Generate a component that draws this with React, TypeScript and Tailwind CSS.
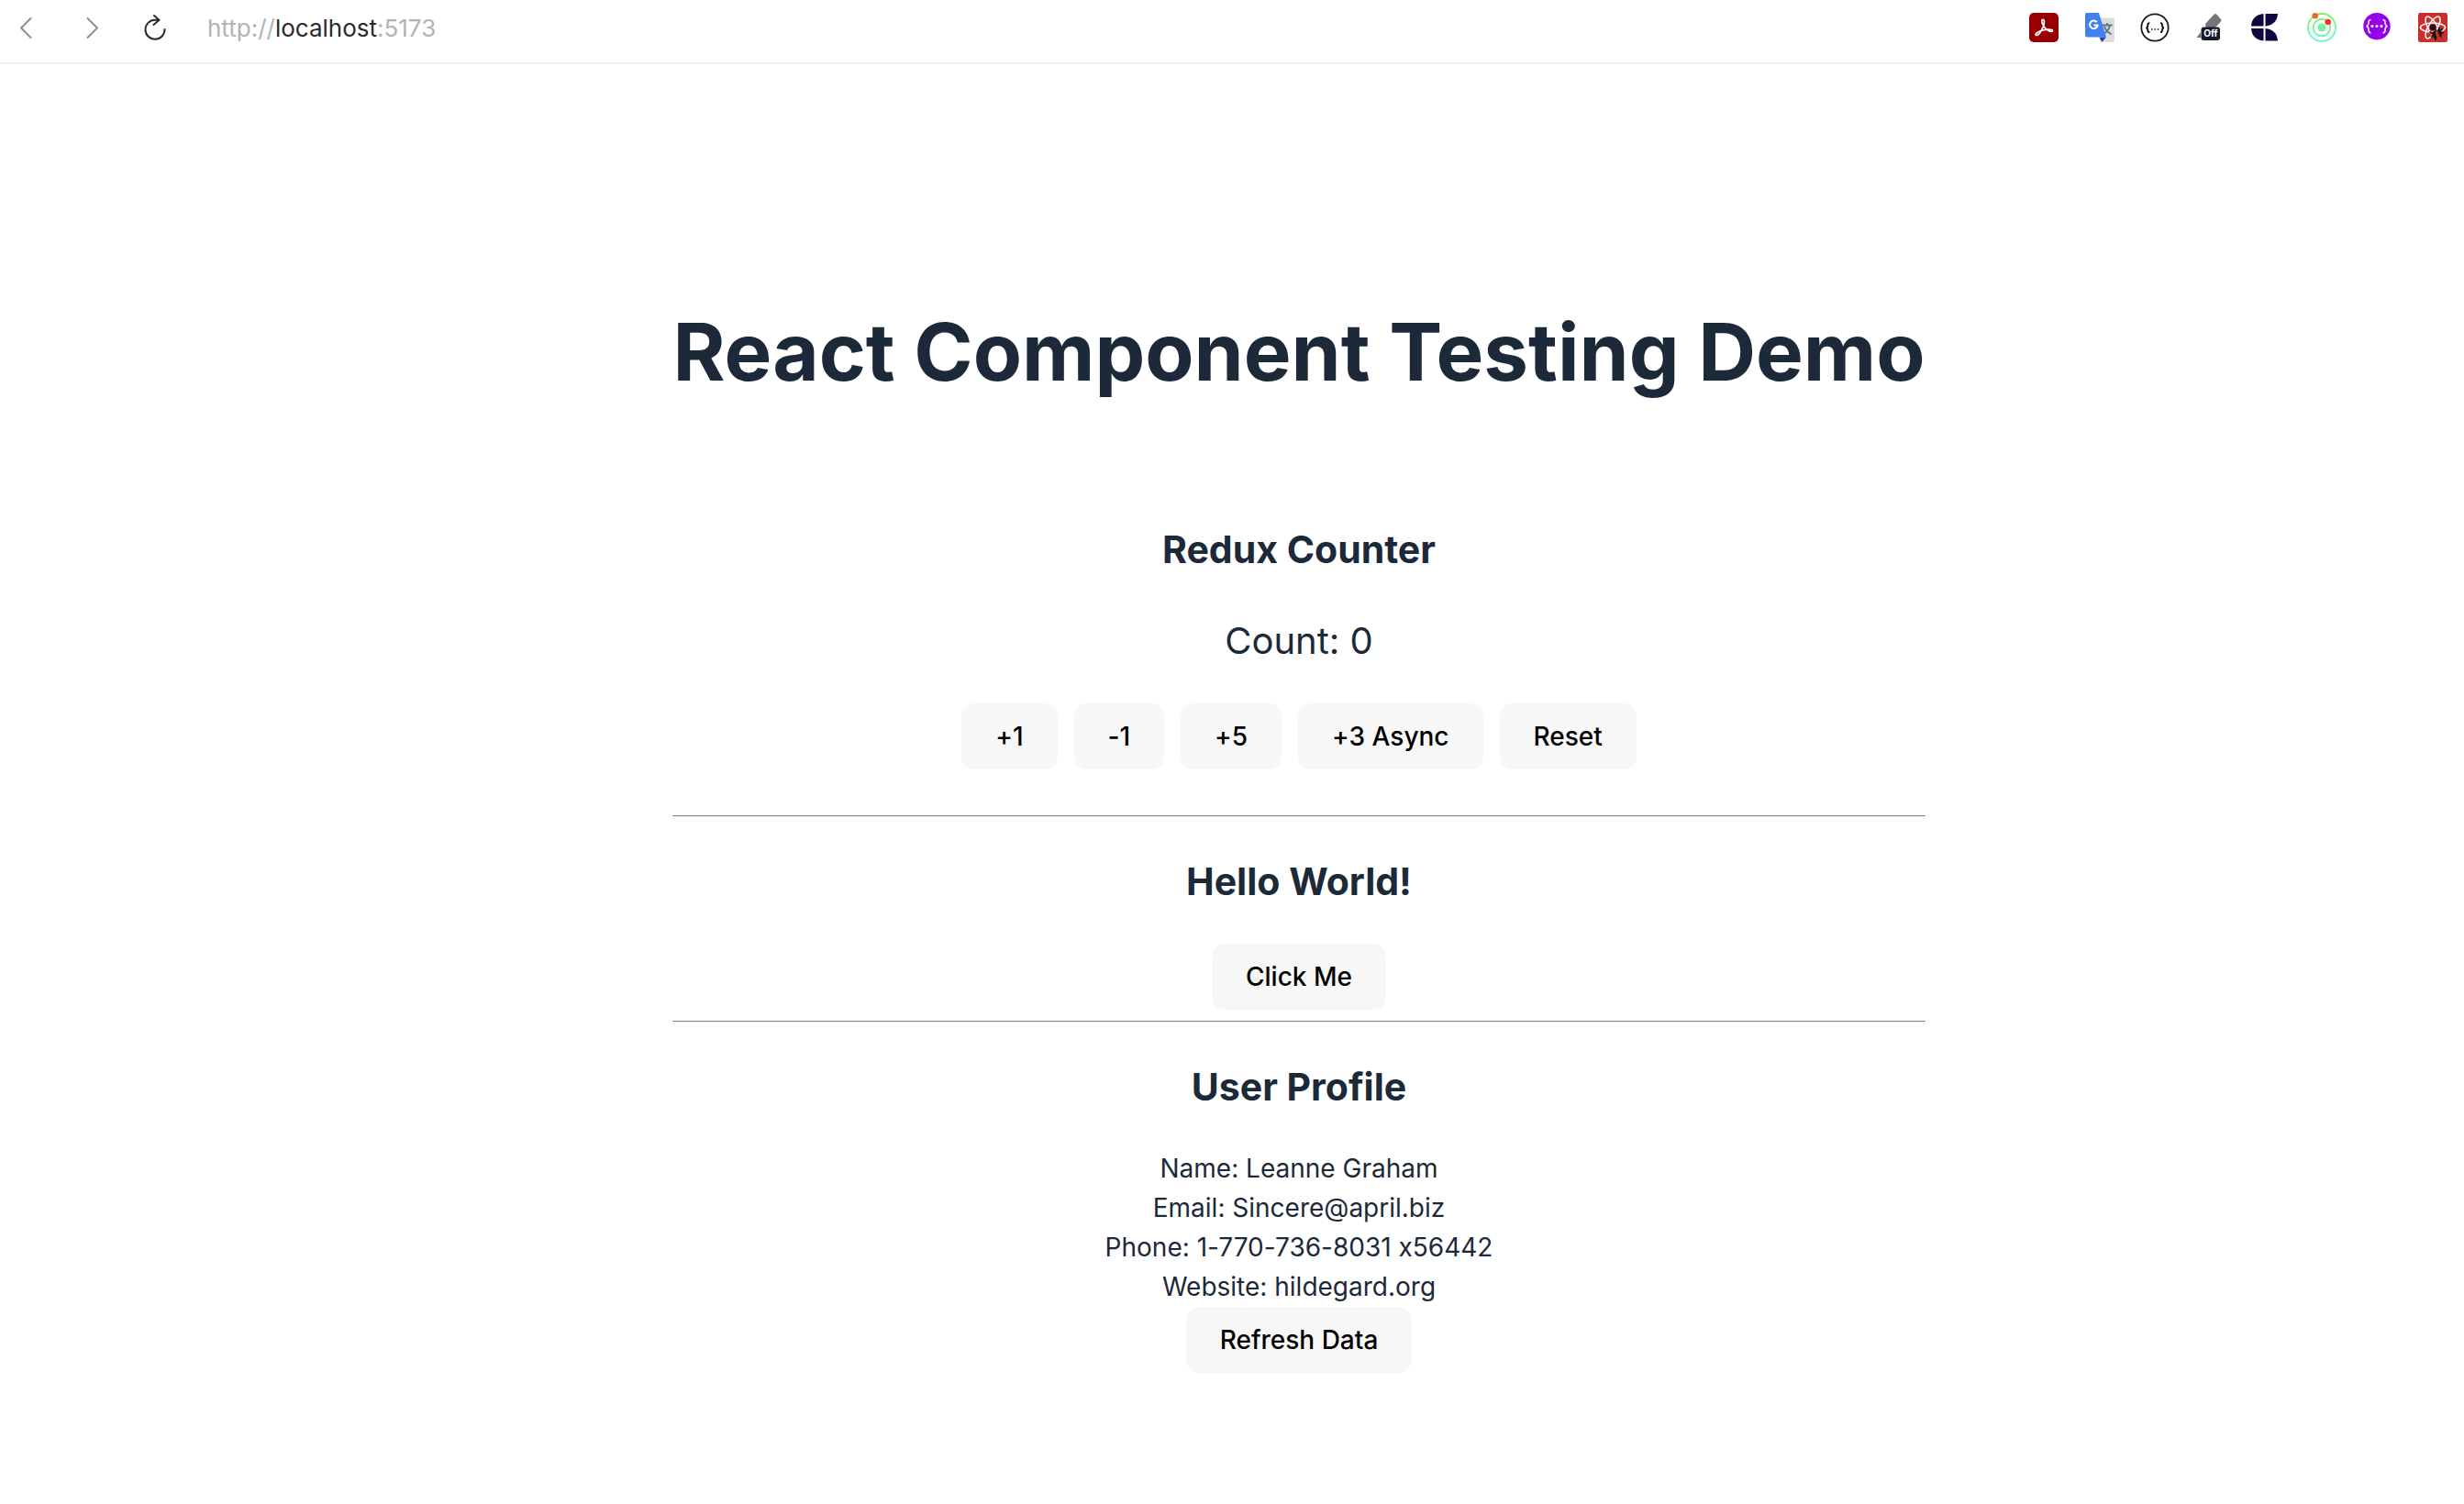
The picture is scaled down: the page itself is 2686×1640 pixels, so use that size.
import { useState, type ReactNode } from 'react';

function ActionButton({ children, onClick }: { children: ReactNode; onClick?: () => void }) {
  return (
    <button
      type="button"
      onClick={onClick}
      className="h-[72px] rounded-[14px] bg-[#f7f7f7] px-[37px] text-[28px] font-medium text-black"
    >
      {children}
    </button>
  );
}

function SectionTitle({ children }: { children: ReactNode }) {
  return <h2 className="text-[41px] leading-[64px] font-bold">{children}</h2>;
}

function Divider() {
  return <hr className="border-t border-b border-t-[#858788] border-b-[#ececec]" />;
}

function AcrobatIcon() {
  return (
    <svg viewBox="0 0 32 32" className="size-8" fill="none">
      <rect width="32" height="32" rx="5" fill="#980000" />
      <path
        d="M14.6 7.6c2.2-.9 2.6 3.2.2 8.6-2.200 5-5.200 8.800-7.200 8.300-2.200-.8 1.400-4 6.200-5.300 5-1.400 11.600-1.600 11.600.3 0 2.200-5.200.5-8.200-3-3-3.300-4.200-8.200-2.600-8.900z"
        stroke="#fff"
        strokeWidth="1.7"
        strokeLinejoin="round"
      />
    </svg>
  );
}

function TranslateIcon() {
  return (
    <svg viewBox="0 0 32 32" className="size-8" fill="none">
      <path d="M13 5.500h17a2 2 0 0 1 2 2V30a2 2 0 0 1-2 2H19z" fill="#dcdcdc" />
      <path d="M19 13.500h10.500M24 11v2.500M27 13.500c-.8 4-3.500 7.500-7 9.800M21 15c1.200 3.500 4 6.500 7.500 8.500" stroke="#5b7583" strokeWidth="1.800" />
      <path d="M15.500 26.500h7.500L18 32z" fill="#2a3db0" />
      <path d="M2 0h13l8 26.500H2a2 2 0 0 1-2-2V2a2 2 0 0 1 2-2z" fill="#4280ef" />
      <path d="M12.700 10.200A4.300 4.300 0 1 0 13.600 13.500H9.400" stroke="#fff" strokeWidth="2" />
    </svg>
  );
}

function BracesRingIcon() {
  return (
    <svg viewBox="0 0 32 32" className="size-8" fill="none">
      <circle cx="16" cy="16" r="14.700" stroke="#1b1b1b" strokeWidth="1.800" />
      <path
        d="M10.300 11.200c-2 0-2 .8-2 2.300s-.2 2.600-1.900 2.800c1.700.2 1.900 1.200 1.900 2.600s0 2.300 2 2.300M22 11.200c2 0 2 .8 2 2.300s.2 2.600 1.900 2.800c-1.700.2-1.900 1.200-1.900 2.600s0 2.300-2 2.300"
        stroke="#000"
        strokeWidth="1.700"
      />
      <path d="M12 17.200h1.600v1.600H12zM15.400 17.200H17v1.600h-1.600zM18.800 17.200h1.600v1.600h-1.600z" fill="#222" />
    </svg>
  );
}

function HighlighterIcon() {
  return (
    <svg viewBox="0 0 32 32" className="size-8">
      <path d="M19.500 1.800q1.500-1.500 3 0l4.600 5.400q.8 1.200-.3 2.500L19 18h-8l-1-6z" fill="#757575" />
      <path d="M5 21v6H.5z" fill="#757575" />
      <rect x="5.500" y="15.500" width="20.500" height="14.500" rx="3" fill="#171a2b" />
      <text x="15.800" y="26.200" textAnchor="middle" fill="#fff" fontSize="10" fontWeight="700" fontFamily="Inter, sans-serif">
        Off
      </text>
    </svg>
  );
}

function QuarterKIcon() {
  return (
    <svg viewBox="0 0 32 32" className="size-8" fill="#10053f">
      <path d="M13.500 1v13.500H0C.6 6.500 5.500 1.500 13.500 1zM15.500 1H29c-.5 8-5.500 13-13.500 13.500zM0 17h13.500v13.500C5.500 30 .6 25 0 17zM15.500 17C23.500 17.500 28.500 22.500 29 30.500H15.500z" />
    </svg>
  );
}

function OrbitIcon() {
  return (
    <svg viewBox="0 0 32 32" className="size-8" fill="none">
      <defs>
        <linearGradient id="orbit" x1="0" y1="0" x2="0" y2="32" gradientUnits="userSpaceOnUse">
          <stop stopColor="#7df45c" />
          <stop offset="1" stopColor="#70f5dc" />
        </linearGradient>
      </defs>
      <circle cx="16" cy="16" r="15" stroke="url(#orbit)" strokeWidth="1.900" />
      <circle cx="16" cy="16" r="9.300" stroke="url(#orbit)" strokeWidth="1.900" />
      <circle cx="16" cy="16" r="4.600" fill="url(#orbit)" />
      <circle cx="8.700" cy="3.300" r="3.300" fill="#ec6b2b" />
      <circle cx="22.700" cy="10" r="3.300" fill="#e8382c" />
    </svg>
  );
}

function PurpleBracesIcon() {
  return (
    <svg viewBox="0 0 32 32" className="size-8" fill="none">
      <circle cx="16" cy="14.700" r="14.700" fill="#9500ed" />
      <path
        d="M9.500 7.500c-2.200 0-2.500.8-2.500 2.800s-.2 4-2.500 4.300c2.300.3 2.500 2.300 2.500 4.300s.3 2.800 2.500 2.800M22.500 7.500c2.200 0 2.500.8 2.500 2.800s.2 4 2.500 4.300c-2.300.3-2.500 2.300-2.500 4.300s-.3 2.800-2.500 2.800"
        stroke="#fff"
        strokeWidth="1.600"
      />
      <circle cx="11" cy="14.600" r="1.500" fill="#fff" />
      <circle cx="16" cy="14.600" r="1.500" fill="#fff" />
      <circle cx="21" cy="14.600" r="1.500" fill="#fff" />
    </svg>
  );
}

function ReactBugIcon() {
  return (
    <svg viewBox="0 0 32 32" className="size-8" fill="none">
      <rect width="32" height="32" rx="2.500" fill="#cb2f2b" />
      <g stroke="#fff" strokeWidth="1.500">
        <ellipse cx="16" cy="16" rx="13.500" ry="5" />
        <ellipse cx="16" cy="16" rx="13.500" ry="5" transform="rotate(60 16 16)" />
        <ellipse cx="16" cy="16" rx="13.500" ry="5" transform="rotate(120 16 16)" />
      </g>
      <path d="M15 21l10-3 4 10-6 3-8-1z" fill="#cb2f2b" />
      <circle cx="16" cy="15.800" r="3.200" fill="#161616" />
      <path d="M14 22l4.500-2.500 2 8.500-2 1.500zM20.500 18.500l3.500-1 2 6-2 3z" fill="#161616" />
      <path
        d="M12.500 20.500l3 2M14 26.500l3-1.500M19 30l.5-3M18 17.500l2 2.500M22.500 15.500l.5 3M27 17.500l-3 1.500M28 22l-3-.5M25.500 26.500l-2-2.500"
        stroke="#161616"
        strokeWidth="1.600"
      />
    </svg>
  );
}

const extensions = [
  { name: 'Acrobat', icon: <AcrobatIcon /> },
  { name: 'Translate', icon: <TranslateIcon /> },
  { name: 'JSON viewer', icon: <BracesRingIcon /> },
  { name: 'Highlighter', icon: <HighlighterIcon /> },
  { name: 'Checker', icon: <QuarterKIcon /> },
  { name: 'Orbit', icon: <OrbitIcon /> },
  { name: 'Formatter', icon: <PurpleBracesIcon /> },
  { name: 'React developer tools', icon: <ReactBugIcon /> },
];

function BrowserBar() {
  return (
    <header className="flex h-[70px] items-center border-b-2 border-[#efefef] pr-[18px] pb-2 pl-4">
      <nav aria-label="Browser" className="flex items-center gap-12">
        <button type="button" aria-label="Back" className="text-[#8f8f8f]">
          <svg viewBox="0 0 24 24" className="size-6" fill="none" stroke="currentColor" strokeWidth="2" strokeLinecap="round" strokeLinejoin="round">
            <path d="M17.500 2L7 12.500 17.500 23" />
          </svg>
        </button>
        <button type="button" aria-label="Forward" className="text-[#8f8f8f]">
          <svg viewBox="0 0 24 24" className="size-6" fill="none" stroke="currentColor" strokeWidth="2" strokeLinecap="round" strokeLinejoin="round">
            <path d="M7.500 2L18 12.500 7.500 23" />
          </svg>
        </button>
        <button type="button" aria-label="Reload" className="-ml-1.5 text-[#2b2b2b]">
          <svg viewBox="0 0 28 28" className="size-7" fill="none" stroke="currentColor" strokeWidth="2" strokeLinecap="round" strokeLinejoin="round">
            <path d="M25.500 16A10.500 10.500 0 1 1 15 5.800H19M14 1l5.500 4.800L13.500 11" />
          </svg>
        </button>
      </nav>
      <p className="ml-11 flex-1 pt-0.5 text-[26px] leading-[32px] text-[#b3b3b3]">
        http://<span className="text-[#2b2b2b]">localhost</span>:5173
      </p>
      <ul className="flex w-[456px] items-center justify-between">
        {extensions.map((item) => (
          <li key={item.name} className="flex">
            <button type="button" aria-label={item.name}>
              {item.icon}
            </button>
          </li>
        ))}
      </ul>
    </header>
  );
}

export default function App() {
  const [count, setCount] = useState(0);

  return (
    <div className="min-h-screen bg-white font-['Inter','Noto_Sans',sans-serif] text-[#1c2939] [font-feature-settings:'calt'_0]">
      <BrowserBar />
      <main className="flex justify-center pt-[262px] pb-32 pl-[146px]">
        <div className="flex flex-col text-center">
          <h1 className="text-[87px] leading-[104px] font-bold">React Component Testing Demo</h1>

          <section className="flex flex-col items-center pt-[131px] pb-[50px]">
            <SectionTitle>Redux Counter</SectionTitle>
            <p className="pt-9 text-[40px] leading-[64px]">Count: {count}</p>
            <div className="flex gap-[18px] pt-9">
              <ActionButton onClick={() => setCount(count + 1)}>+1</ActionButton>
              <ActionButton onClick={() => setCount(count - 1)}>-1</ActionButton>
              <ActionButton onClick={() => setCount(count + 5)}>+5</ActionButton>
              <ActionButton onClick={() => setTimeout(() => setCount((c) => c + 3), 1000)}>+3 Async</ActionButton>
              <ActionButton onClick={() => setCount(0)}>Reset</ActionButton>
            </div>
          </section>

          <Divider />

          <section className="flex flex-col items-center gap-9 pt-[38px] pb-3">
            <SectionTitle>Hello World!</SectionTitle>
            <ActionButton>Click Me</ActionButton>
          </section>

          <Divider />

          <section className="flex flex-col items-center pt-[38px]">
            <SectionTitle>User Profile</SectionTitle>
            <div className="pt-9 text-[28px] leading-[43px]">
              <p>Name: Leanne Graham</p>
              <p>Email: Sincere@april.biz</p>
              <p>Phone: 1-770-736-8031 x56442</p>
              <p>Website: hildegard.org</p>
            </div>
            <ActionButton>Refresh Data</ActionButton>
          </section>
        </div>
      </main>
    </div>
  );
}
